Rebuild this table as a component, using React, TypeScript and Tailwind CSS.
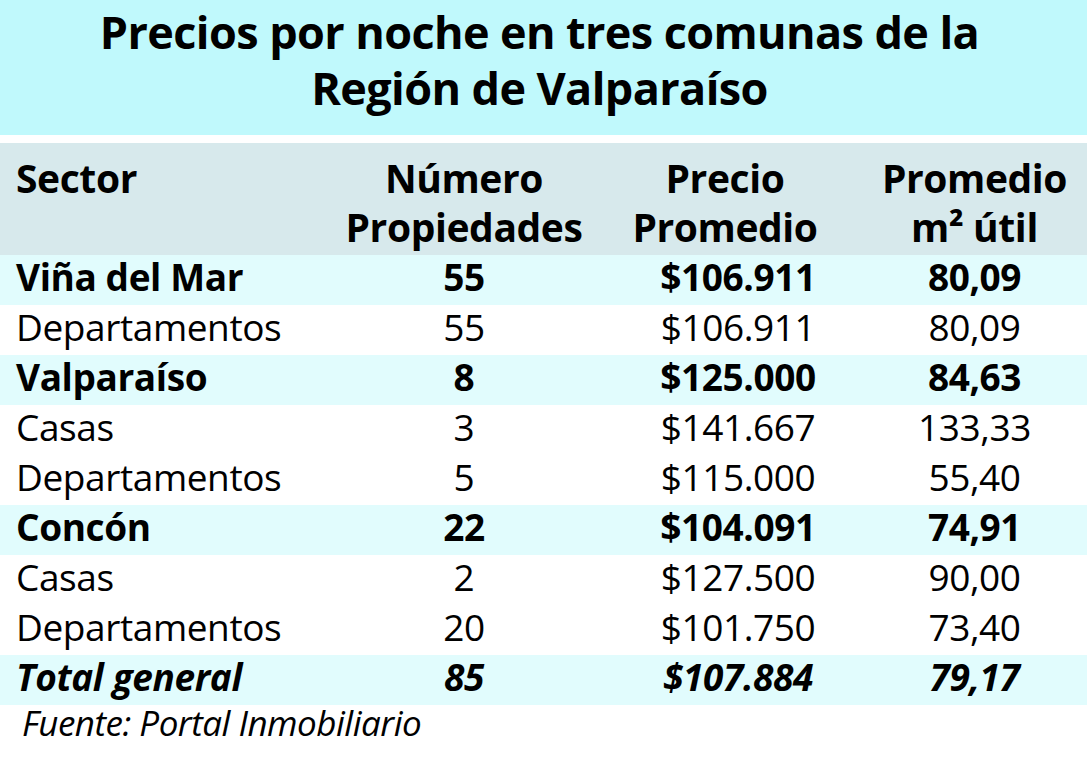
const rows = [
  { s: "Viña del Mar", n: "55", p: "$106.911", m: "80,09", bold: true },
  { s: "Departamentos", n: "55", p: "$106.911", m: "80,09" },
  { s: "Valparaíso", n: "8", p: "$125.000", m: "84,63", bold: true },
  { s: "Casas", n: "3", p: "$141.667", m: "133,33" },
  { s: "Departamentos", n: "5", p: "$115.000", m: "55,40" },
  { s: "Concón", n: "22", p: "$104.091", m: "74,91", bold: true },
  { s: "Casas", n: "2", p: "$127.500", m: "90,00" },
  { s: "Departamentos", n: "20", p: "$101.750", m: "73,40" },
  { s: "Total general", n: "85", p: "$107.884", m: "79,17", bold: true, italic: true },
];

const cols = "grid grid-cols-[340px_248px_274px_225px]";

export default function App() {
  return (
    <div className="w-[1087px] h-[765px] bg-white text-black font-['Open_Sans',sans-serif] overflow-hidden">
      <div className="h-[135px] bg-[#c0f9fc] pt-[4px]">
        <h1 className="text-[45px] leading-[56px] font-bold text-center tracking-[-0.6px] pr-[8px]">
          Precios por noche en tres comunas de la
          <br />
          Región de Valparaíso
        </h1>
      </div>
      <div className="h-[8px]" />
      <div className={`${cols} h-[112px] bg-[#d7e9ec] items-start pt-[10px] text-[39px] leading-[49px] font-bold tracking-[-0.4px]`}>
        <div className="pl-[16px]">Sector</div>
        <div className="text-center">Número<br />Propiedades</div>
        <div className="text-center">Precio<br />Promedio</div>
        <div className="text-center">Promedio<br />m² útil</div>
      </div>
      {rows.map((r, i) => (
        <div
          key={i}
          className={`${cols} h-[50px] items-start text-[37px] leading-[44px] tracking-[-0.4px] ${r.bold ? "bg-[#e1fcfd] font-bold" : "font-normal"} ${r.italic ? "italic" : ""}`}
        >
          <div className="pl-[16px]">{r.s}</div>
          <div className="text-center">{r.n}</div>
          <div className="text-center pl-[26px]">{r.p}</div>
          <div className="text-center">{r.m}</div>
        </div>
      ))}
      <div className="pl-[22px] text-[35px] leading-[36px] italic tracking-[-0.5px]">Fuente: Portal Inmobiliario</div>
    </div>
  );
}
